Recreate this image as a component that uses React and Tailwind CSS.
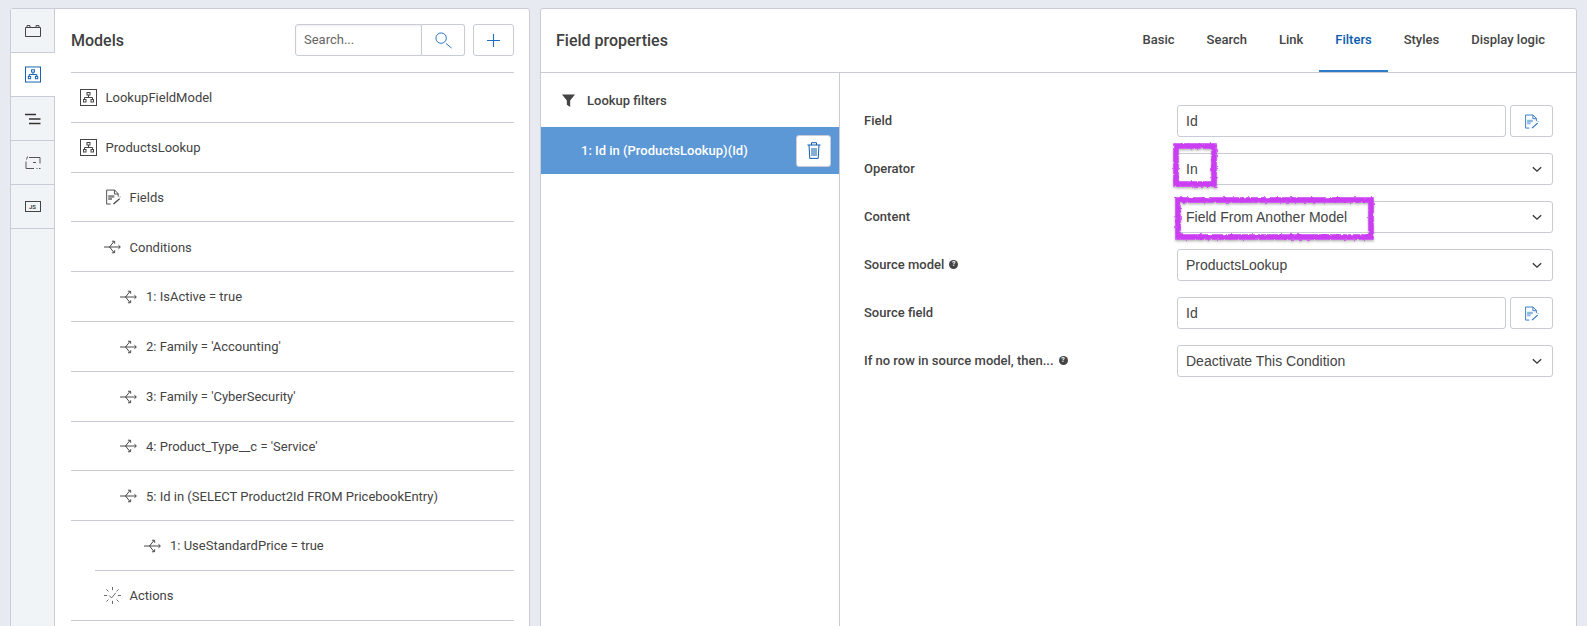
import React from 'react';

const ModelIcon = ({ className }) => (
  <svg viewBox="0 0 17 17" className={className} fill="none" stroke="currentColor">
    <rect x="0.5" y="0.5" width="16" height="16" />
    <rect x="7" y="3.5" width="3" height="2.5" />
    <rect x="3.5" y="10.5" width="2.5" height="2.5" />
    <rect x="11" y="10.5" width="2.5" height="2.5" />
    <path d="M8.5 6v2.5M4.5 10.5v-2h8v2" />
  </svg>
);

const ConditionIcon = () => (
  <svg viewBox="0 0 17 14" className="w-[17px] h-[14px] text-[#333]" fill="none" stroke="currentColor" strokeWidth="0.9">
    <path d="M0 7h16M5.5 7L10 1.5M5.5 7L10 12.5" />
    <path d="M8 1.2l2.6.1.1 2.4M8 12.8l2.6-.1.1-2.4M14.4 5.2L16.4 7l-2 1.8" />
  </svg>
);

const FieldsIcon = ({ className, fill }) => (
  <svg viewBox="0 0 16 16" className={className} fill="none" stroke="currentColor">
    <path d="M5 15.5H.7V.6h8.6l3.7 4v3" />
    <path d="M9 .8v4h4" />
    <rect x="2.4" y="6" width="6.5" height="2.8" fill={fill} stroke="none" />
    <rect x="2.4" y="8.8" width="4" height="2.4" fill={fill} stroke="none" />
    <path d="M8 15.5l6.5-5.6" strokeWidth="1.3" />
    <path d="M15 7.5v.8" />
  </svg>
);

const ActionsIcon = () => (
  <svg viewBox="0 0 17 17" className="w-[17px] h-[17px] text-[#444]" fill="none" stroke="currentColor" strokeWidth="0.8">
    <path d="M8.5 0v3.2M8.5 13.8V17M0 8.5h3.2M13.8 8.5H17M2.4 2.4l2 2M12.6 12.6l2 2M2.4 14.6l2-2M12.6 4.4l2-2" />
    <path d="M5.3 8.6l2.3 2.3 4.2-5" />
  </svg>
);

const Chevron = () => (
  <svg viewBox="0 0 12 8" className="w-[10px] h-[7px] text-[#333]" fill="none" stroke="currentColor" strokeWidth="1.6">
    <path d="M1 1.4l5 4.6 5-4.6" />
  </svg>
);

const Help = () => (
  <span className="inline-flex items-center justify-center w-[9px] h-[9px] rounded-full bg-[#444] text-white text-[7px] font-bold leading-none ml-[5px]">?</span>
);

const rows = [
  { text: 'LookupFieldModel', pl: 'pl-[9px]', icon: <ModelIcon className="w-[17px] h-[17px] text-[#444]" />, gap: 'gap-[8.5px]' },
  { text: 'ProductsLookup', pl: 'pl-[9px]', icon: <ModelIcon className="w-[17px] h-[17px] text-[#444]" />, gap: 'gap-[8.5px]' },
  { text: 'Fields', pl: 'pl-[35px]', icon: <FieldsIcon className="w-[15px] h-[16px] text-[#444]" fill="#8a8a8a" />, gap: 'gap-[8.5px]' },
  { text: 'Conditions', pl: 'pl-[33px]', icon: <ConditionIcon />, gap: 'gap-[8.5px]' },
  { text: '1: IsActive = true', pl: 'pl-[49px]', icon: <ConditionIcon />, gap: 'gap-[9px]' },
  { text: "2: Family = 'Accounting'", pl: 'pl-[49px]', icon: <ConditionIcon />, gap: 'gap-[9px]' },
  { text: "3: Family = 'CyberSecurity'", pl: 'pl-[49px]', icon: <ConditionIcon />, gap: 'gap-[9px]' },
  { text: "4: Product_Type__c = 'Service'", pl: 'pl-[49px]', icon: <ConditionIcon />, gap: 'gap-[9px]' },
  { text: '5: Id in (SELECT Product2Id FROM PricebookEntry)', pl: 'pl-[49px]', icon: <ConditionIcon />, gap: 'gap-[9px]' },
  { text: '1: UseStandardPrice = true', pl: 'pl-[73px]', icon: <ConditionIcon />, gap: 'gap-[9px]', indentLine: true },
  { text: 'Actions', pl: 'pl-[33px]', icon: <ActionsIcon />, gap: 'gap-[8.5px]' },
];

const railIcons = [
  <svg key="a" viewBox="0 0 16 12" className="w-[16px] h-[12px] text-[#444]" fill="none" stroke="currentColor">
    <path d="M.5 2.5h15v9H.5zM2 2.5V.6h3v1.9M11 2.5V.6h3v1.9" />
  </svg>,
  <ModelIcon key="b" className="w-[16px] h-[17px] text-[#0b5cad]" />,
  <svg key="c" viewBox="0 0 16 12" className="w-[16px] h-[12px] text-[#333]" fill="none" stroke="currentColor" strokeWidth="1.6">
    <path d="M0 1.5h11M4 6h11.5M4 10.5h11.5" />
  </svg>,
  <svg key="d" viewBox="0 0 16 16" className="w-[16px] h-[16px] text-[#555]" fill="none" stroke="currentColor">
    <path d="M4 2.5h11v6M8 7.5h3M1 6.5v7h8M11.5 13.5h1M14 13.5h1.5" />
    <path d="M1.5 4.5l1-3" />
  </svg>,
  <span key="e" className="flex items-center justify-center w-[16px] h-[11px] border border-[#444] text-[6px] font-bold leading-none text-[#444]">JS</span>,
];

const Select = ({ value }) => (
  <div className="h-[32px] border border-[#c9ccd6] rounded-[3px] bg-white flex items-center justify-between pl-[8px] pr-[10px] font-['Liberation_Sans',sans-serif] text-[14px] text-[#444]">
    <span>{value}</span>
    <Chevron />
  </div>
);

const InputWithButton = ({ value }) => (
  <div className="flex gap-[4px]">
    <div className="w-[329px] h-[32px] border border-[#c9ccd6] rounded-[3px] flex items-center pl-[8px] font-['Liberation_Sans',sans-serif] text-[14px] text-[#444]">{value}</div>
    <div className="w-[43px] h-[32px] border border-[#c9ccd6] rounded-[3px] flex items-center justify-center">
      <FieldsIcon className="w-[14px] h-[15px] text-[#1f6fc4]" fill="#8db7e3" />
    </div>
  </div>
);

const fields = [
  { label: 'Field', control: <InputWithButton value="Id" /> },
  { label: 'Operator', control: <Select value="In" /> },
  { label: 'Content', control: <Select value="Field From Another Model" /> },
  { label: 'Source model', help: true, control: <Select value="ProductsLookup" /> },
  { label: 'Source field', control: <InputWithButton value="Id" /> },
  { label: 'If no row in source model, then...', help: true, control: <Select value="Deactivate This Condition" /> },
];

const tabs = ['Basic', 'Search', 'Link', 'Filters', 'Styles', 'Display logic'];

export default function App() {
  return (
    <div className="relative h-[626px] overflow-hidden bg-[#e7eaf0] pt-[8px] pl-[10px] pr-[10px] flex gap-[10px] font-['Roboto',sans-serif] text-[#444]">
      {/* models panel */}
      <div className="w-[520px] h-[640px] shrink-0 flex bg-white border border-[#c9ccd6] rounded-t-[3px]">
        <div className="w-[44px] shrink-0 h-full bg-[#f1f4f6] border-r border-[#c9ccd6]">
          {railIcons.map((icon, i) => (
            <div key={i} className={`h-[44px] flex items-center justify-center border-b border-[#c9ccd6] ${i === 1 ? 'bg-white -mr-px' : ''}`}>
              {icon}
            </div>
          ))}
        </div>
        <div className="flex-1 pl-[16px] pr-[15px]">
          <div className="h-[64px] flex items-center justify-between border-b border-[#c9ccd6]">
            <span className="text-[16px] font-medium text-[#404040]">Models</span>
            <div className="flex gap-[8px] pb-[1px]">
              <div className="flex h-[32px]">
                <div className="w-[127px] border border-[#c9ccd6] rounded-l-[3px] flex items-center pl-[8px] text-[13px] text-[#666] shadow-[inset_0_1px_2px_rgba(0,0,0,0.08)]">Search...</div>
                <div className="w-[43px] border border-l-0 border-[#c9ccd6] rounded-r-[3px] flex items-center justify-center">
                  <svg viewBox="0 0 18 18" className="w-[17px] h-[17px] text-[#1f6fc4]" fill="none" stroke="currentColor" strokeWidth="1">
                    <circle cx="6.5" cy="6.5" r="5.5" />
                    <path d="M11.5 12l6 5" />
                  </svg>
                </div>
              </div>
              <div className="w-[41px] h-[32px] border border-[#c9ccd6] rounded-[3px] flex items-center justify-center">
                <svg viewBox="0 0 13 13" className="w-[13px] h-[13px] text-[#1f6fc4]" fill="none" stroke="currentColor" strokeWidth="1.1">
                  <path d="M6.5 0v13M0 6.5h13" />
                </svg>
              </div>
            </div>
          </div>
          {rows.map((row) => (
            <div key={row.text} className={`relative h-[49.8px] flex items-center ${row.pl} ${row.gap} text-[13px] text-[#444]`}>
              {row.icon}
              <span>{row.text}</span>
              <div className={`absolute bottom-0 right-0 h-px bg-[#c9ccd6] ${row.indentLine ? 'left-[24px]' : 'left-0'}`} />
            </div>
          ))}
        </div>
      </div>

      {/* field properties panel */}
      <div className="flex-1 h-[640px] bg-white border border-[#c9ccd6] rounded-t-[3px]">
        <div className="h-[64px] flex items-center justify-between border-b border-[#c9ccd6] pl-[15px] pr-[15px]">
          <span className="text-[16px] font-medium text-[#404040]">Field properties</span>
          <div className="flex h-full">
            {tabs.map((tab) => (
              <div key={tab} className={`relative h-full flex items-center px-[16px] text-[13px] font-medium ${tab === 'Filters' ? 'text-[#0b5cad]' : 'text-[#444]'}`}>
                <span className="-mt-[2px]">{tab}</span>
                {tab === 'Filters' && <div className="absolute left-0 right-0 bottom-0 h-[2px] bg-[#2f7cc9]" />}
              </div>
            ))}
          </div>
        </div>
        <div className="flex h-full">
          <div className="w-[299px] shrink-0 border-r border-[#c9ccd6]">
            <div className="h-[54px] flex items-center pl-[21px] gap-[12px] text-[13px] font-medium text-[#444]">
              <svg viewBox="0 0 14 14" className="w-[13px] h-[13px] text-[#444]" fill="currentColor">
                <path d="M0 .5h14L8.8 7v7L5.2 11.5V7z" />
              </svg>
              <span className="mt-[2px]">Lookup filters</span>
            </div>
            <div className="h-[47px] bg-[#5c98d6] flex items-center justify-between pl-[40px] pr-[8px] text-[13px] font-medium text-white">
              <span>1: Id in (ProductsLookup)(Id)</span>
              <div className="w-[35px] h-[32px] bg-white border border-[#c9ccd6] rounded-[3px] flex items-center justify-center">
                <svg viewBox="0 0 14 17" className="w-[14px] h-[17px] text-[#0b5cad]" fill="none" stroke="currentColor">
                  <path d="M.5 3h13M4.5 3V.7h5V3M2 3l.8 13.4h8.4L12 3M5 6v8M7 6v8M9 6v8" />
                </svg>
              </div>
            </div>
          </div>
          <div className="flex-1 pt-[32px] pl-[24px] pr-[23px]">
            <div className="flex flex-col gap-[16px]">
              {fields.map((f) => (
                <div key={f.label} className="flex items-center">
                  <div className="w-[313px] shrink-0 flex items-center text-[13px] font-medium text-[#444] -mt-[1px]">
                    {f.label}
                    {f.help && <Help />}
                  </div>
                  <div className="flex-1">{f.control}</div>
                </div>
              ))}
            </div>
          </div>
        </div>
      </div>

      {/* hand drawn highlights on top of the form */}
      <svg className="absolute left-[1170px] top-[140px] w-[210px] h-[105px] pointer-events-none" viewBox="0 0 210 105" fill="none">
        <defs>
          <filter id="rough" x="-10%" y="-10%" width="120%" height="120%">
            <feTurbulence type="fractalNoise" baseFrequency="0.3" numOctaves="2" seed="4" />
            <feDisplacementMap in="SourceGraphic" scale="3" />
            <feGaussianBlur stdDeviation="0.4" />
            <feDropShadow dx="0" dy="1.5" stdDeviation="1" floodColor="#000" floodOpacity="0.3" />
          </filter>
        </defs>
        <g filter="url(#rough)" stroke="#cb3df2" strokeWidth="5.5">
          <rect x="6" y="6" width="38" height="38" />
          <rect x="8" y="60" width="193" height="37" />
        </g>
      </svg>
    </div>
  );
}
